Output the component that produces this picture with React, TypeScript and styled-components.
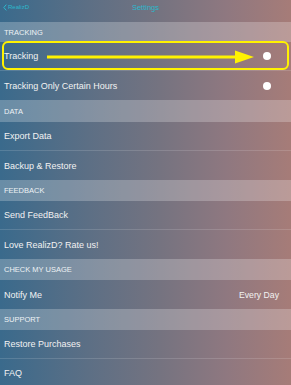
import React from "react";
import styled, { createGlobalStyle } from "styled-components";

const Global = createGlobalStyle`
  html, body { margin: 0; padding: 0; }
  body {
    width: 291px;
    height: 385px;
    overflow: hidden;
    font-family: "Liberation Sans", Arial, sans-serif;
  }
`;

const Page = styled.div`
  width: 291px;
  height: 385px;
  overflow: hidden;
  display: flex;
  flex-direction: column;
  background: linear-gradient(to right, #3a6a8c 0%, #5c6f85 30%, #757380 55%, #8f7880 78%, #a67c78 100%);
`;

const NavBar = styled.div`
  height: 22px;
  flex: none;
  position: relative;
  display: flex;
  align-items: flex-start;
  justify-content: center;
  padding-top: 3px;
  box-sizing: border-box;
`;

const Back = styled.div`
  position: absolute;
  left: 3px;
  top: 3px;
  display: flex;
  align-items: center;
  gap: 1px;
  color: #2cb8cc;
  font-size: 6px;
  line-height: 8px;
`;

const NavTitle = styled.div`
  color: #2cb8cc;
  font-size: 7.5px;
  line-height: 9px;
`;

const SectionHeader = styled.div<{ $h?: number }>`
  height: ${(p) => p.$h ?? 21}px;
  flex: none;
  display: flex;
  align-items: center;
  padding-left: 4px;
  background: rgba(255, 255, 255, 0.24);
  color: #eef2f5;
  font-size: 7.5px;
  text-transform: uppercase;
`;

const Row = styled.div<{ $last?: boolean }>`
  height: 29px;
  flex: none;
  position: relative;
  display: flex;
  align-items: center;
  justify-content: space-between;
  padding: 0 11px 0 4px;
  box-sizing: border-box;
  color: #f2f2f2;
  font-size: 9px;
  border-bottom: ${(p) => (p.$last ? "none" : "1px solid rgba(255,255,255,0.14)")};
`;

const Value = styled.span`
  color: #f2f2f2;
  font-size: 8.7px;
  margin-right: 1px;
`;

const Knob = styled.span`
  width: 8px;
  height: 8px;
  border-radius: 50%;
  background: #ffffff;
  margin-right: 9px;
`;

const Highlight = styled.div`
  position: absolute;
  left: 2px;
  right: 2px;
  top: -1px;
  bottom: 0px;
  border: 2.5px solid #fff200;
  border-radius: 6px;
  pointer-events: none;
`;

const Arrow = styled.svg`
  position: absolute;
  left: 46px;
  top: 8px;
`;

type Item =
  | { type: "h"; label: string; h?: number }
  | { type: "r"; label: string; toggle?: boolean; value?: string; highlight?: boolean; last?: boolean };

const items: Item[] = [
  { type: "h", label: "Tracking", h: 20 },
  { type: "r", label: "Tracking", toggle: true, highlight: true },
  { type: "r", label: "Tracking Only Certain Hours", toggle: true, last: true },
  { type: "h", label: "Data", h: 22 },
  { type: "r", label: "Export Data" },
  { type: "r", label: "Backup & Restore", last: true },
  { type: "h", label: "Feedback" },
  { type: "r", label: "Send FeedBack" },
  { type: "r", label: "Love RealizD? Rate us!", last: true },
  { type: "h", label: "Check My Usage" },
  { type: "r", label: "Notify Me", value: "Every Day", last: true },
  { type: "h", label: "Support" },
  { type: "r", label: "Restore Purchases" },
  { type: "r", label: "FAQ" },
];

export default function App() {
  return (
    <>
      <Global />
      <Page>
        <NavBar>
          <Back>
            <svg width="4" height="7" viewBox="0 0 4 7">
              <path d="M3.3 0.6 L0.8 3.5 L3.3 6.4" fill="none" stroke="#2cb8cc" strokeWidth="1" />
            </svg>
            <span>RealizD</span>
          </Back>
          <NavTitle>Settings</NavTitle>
        </NavBar>
        {items.map((it, i) =>
          it.type === "h" ? (
            <SectionHeader key={i} $h={it.h}>{it.label}</SectionHeader>
          ) : (
            <Row key={i} $last={it.last}>
              <span>{it.label}</span>
              {it.toggle && <Knob />}
              {it.value && <Value>{it.value}</Value>}
              {it.highlight && (
                <>
                  <Highlight />
                  <Arrow width="210" height="14" viewBox="0 0 210 14">
                    <rect x="1" y="5.5" width="190" height="3" fill="#fff200" />
                    <path d="M189 0.5 L208 7 L189 13.5 Z" fill="#fff200" />
                  </Arrow>
                </>
              )}
            </Row>
          )
        )}
      </Page>
    </>
  );
}
